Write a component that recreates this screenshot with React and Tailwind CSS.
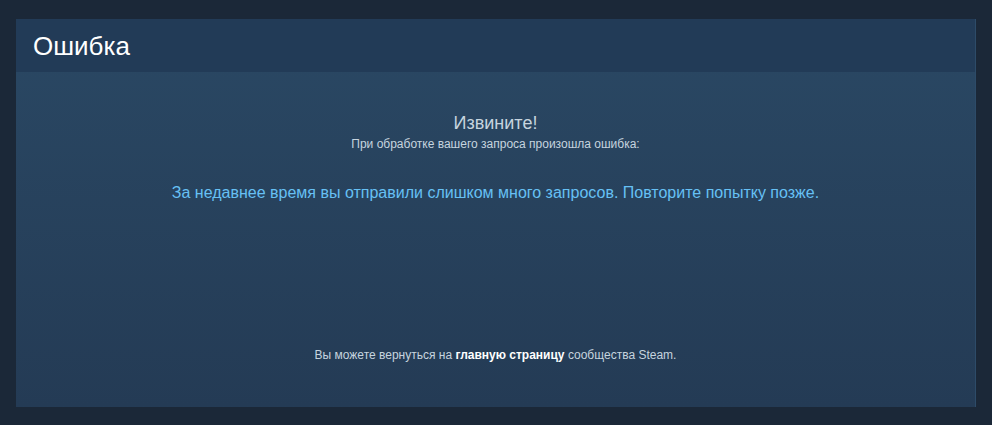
export default function App() {
    return (
        <div className="min-h-[425px] bg-[#1b2838] pt-[19px] pl-4 pr-[17px] pb-[18px] font-['Liberation_Sans',Arial,sans-serif]">
            <div className="bg-[linear-gradient(to_bottom,#2a4864_0%,#243b55_100%)] shadow-[1px_0_0_#2d4b68]">
                <div className="h-[53px] bg-[#223b57] flex items-center px-[17px]">
                    <h2 className="text-[26px] text-white leading-none">Ошибка</h2>
                </div>
                <div className="h-[335px] flex flex-col items-center text-center">
                    <h3 className="mt-[40px] text-[18px] leading-[22px] text-[#c6d4df]">Извините!</h3>
                    <p className="mt-[2px] text-[12px] leading-[16px] text-[#c6d4df]">При обработке вашего запроса произошла ошибка:</p>
                    <p className="mt-[31px] text-[16px] leading-[20px] text-[#66c0f4]">
                        За недавнее время вы отправили слишком много запросов. Повторите попытку позже.
                    </p>
                    <p className="mt-auto mb-[44px] text-[12px] leading-[16px] text-[#c6d4df]">
                        Вы можете вернуться на <a href="#" className="font-bold text-white">главную страницу</a> сообщества Steam.
                    </p>
                </div>
            </div>
        </div>
    );
}
